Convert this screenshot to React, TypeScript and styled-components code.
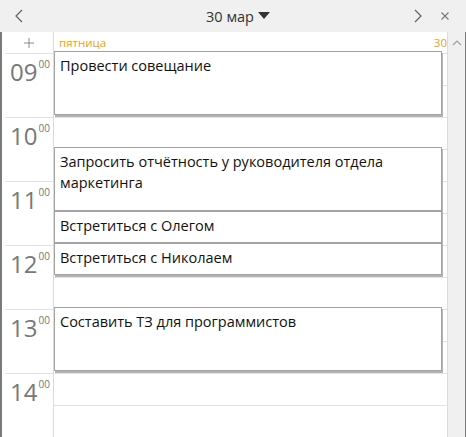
import React from 'react';
import styled, {createGlobalStyle} from 'styled-components';

const HOUR = 64;
const START = 9;

const GlobalStyle = createGlobalStyle`
  html, body {
    margin: 0;
    padding: 0;
    background: #ffffff;
  }
  body {
    font-family: "Open Sans", "Noto Sans", sans-serif;
  }
`

const Window = styled.div`
  width: 466px;
  height: 437px;
  display: flex;
  flex-direction: column;
  overflow: hidden;
  background: #ffffff;
`

const Header = styled.header`
  height: 32px;
  flex: 0 0 auto;
  background: #f0f0f0;
  display: grid;
  grid-template-columns: 1fr auto 1fr;
  align-items: center;
  color: #333;
`

const HeaderSide = styled.div`
  display: flex;
  align-items: center;
  justify-content: ${({$end}) => $end ? 'flex-end' : 'flex-start'};
  gap: 19px;
  padding: ${({$end}) => $end ? '0 17px 0 0' : '0 0 0 15px'};
  color: #606060;
`

const Title = styled.div`
  display: flex;
  align-items: center;
  gap: 4px;
  font-size: 14.5px;
  color: #333;
  padding-left: 10px;
`

const Body = styled.div`
  flex: 1;
  display: flex;
  border-left: 2px solid #7a7a7a;
  border-right: 1px solid #7a7a7a;
  min-height: 0;
`

const Main = styled.div`
  flex: 1;
  display: flex;
  flex-direction: column;
  border-right: 1px solid #dcdcdc;
`

const DayRow = styled.div`
  height: 21px;
  flex: 0 0 auto;
  display: grid;
  grid-template-columns: 52px 1fr;
  align-items: center;
`

const AddCell = styled.div`
  height: 100%;
  display: flex;
  align-items: center;
  justify-content: center;
  padding-left: 2px;
  border-right: 1px solid #dcdcdc;
  box-sizing: border-box;
`

const DayLabel = styled.div`
  display: flex;
  justify-content: space-between;
  align-items: center;
  padding: 0 0 0 5px;
  font-size: 11.5px;
  color: #e8a21a;
`

const Grid = styled.div`
  position: relative;
  flex: 1;
`

const HourRow = styled.div`
  height: ${HOUR}px;
  display: grid;
  grid-template-columns: 52px 1fr;
`

const TimeLabel = styled.div`
  border-right: 1px solid #dcdcdc;
  box-sizing: border-box;
  display: flex;
  align-items: flex-start;
  padding-left: 8px;
  color: #787878;
  position: relative;

  &::before {
    content: '';
    position: absolute;
    top: 0;
    left: 3px;
    right: 0;
    border-top: 1px solid #e2e2e2;
  }
`

const HourNum = styled.span`
  font-size: 24px;
  line-height: 30px;
  margin-top: 4px;
`

const Minutes = styled.span`
  font-size: 10px;
  line-height: 12px;
  margin-left: 1px;
  margin-top: 5px;
`

const Slots = styled.div`
  display: flex;
  flex-direction: column;
  border-top: 1px solid #e2e2e2;
`

const Half = styled.div`
  flex: 1;
  border-top: ${({$line}) => $line ? '1px solid #e2e2e2' : 'none'};
`

const EventCard = styled.div`
  position: absolute;
  left: 52px;
  right: 5px;
  box-sizing: border-box;
  background: #ffffff;
  border: 1px solid #a3a3a3;
  box-shadow: 1px 2px 0 #b4b4b4;
  padding: 3px 5px;
  font-size: 14.5px;
  line-height: 21px;
  color: #111;
`

const Scroll = styled.div`
  width: 17px;
  flex: 0 0 auto;
  background: #f0f0f0;
  display: flex;
  justify-content: center;
  padding-top: 7px;
  box-sizing: border-box;
  color: #a0a0a0;
`

type CalEvent = {title: string; start: number; duration: number};

const events: CalEvent[] = [
  {title: 'Провести совещание', start: 9, duration: 1},
  {title: 'Запросить отчётность у руководителя отдела маркетинга', start: 10.5, duration: 1},
  {title: 'Встретиться с Олегом', start: 11.5, duration: 0.5},
  {title: 'Встретиться с Николаем', start: 12, duration: 0.5},
  {title: 'Составить ТЗ для программистов', start: 13, duration: 1},
];

const hours = [9, 10, 11, 12, 13, 14];

const Chevron = ({dir}: {dir: 'left' | 'right' | 'up'}) => {
  const d = dir === 'left' ? 'M7 1 L1 7 L7 13' : dir === 'right' ? 'M1 1 L7 7 L1 13' : 'M1 6 L5 2 L9 6';
  const w = dir === 'up' ? 10 : 8;
  const h = dir === 'up' ? 8 : 14;
  return <svg width={w} height={h} viewBox={`0 0 ${w} ${h}`} fill="none" stroke="currentColor" strokeWidth="1.2">
    <path d={d}/>
  </svg>
}

export default function App() {
  return <>
    <GlobalStyle/>
    <Window>
      <Header>
        <HeaderSide><Chevron dir="left"/></HeaderSide>
        <Title>
          30 мар
          <svg width="12" height="8" viewBox="0 0 12 8"><path d="M0 0 L12 0 L6 7 Z" fill="#333"/></svg>
        </Title>
        <HeaderSide $end>
          <Chevron dir="right"/>
          <svg width="8" height="8" viewBox="0 0 8 8" stroke="#777" strokeWidth="1.1"><path d="M0.5 0.5 L7.5 7.5 M7.5 0.5 L0.5 7.5"/></svg>
        </HeaderSide>
      </Header>
      <Body>
        <Main>
          <DayRow>
            <AddCell>
              <svg width="10" height="10" viewBox="0 0 10 10" stroke="#8a8a8a" strokeWidth="1"><path d="M5 0 V10 M0 5 H10"/></svg>
            </AddCell>
            <DayLabel>
              <span>пятница</span>
              <span>30</span>
            </DayLabel>
          </DayRow>
          <Grid>
            {hours.map(h => <HourRow key={h}>
              <TimeLabel>
                <HourNum>{String(h).padStart(2, '0')}</HourNum>
                <Minutes>00</Minutes>
              </TimeLabel>
              <Slots>
                <Half/>
                <Half $line/>
              </Slots>
            </HourRow>)}
            {events.map(ev => <EventCard
              key={ev.title}
              style={{top: (ev.start - START) * HOUR - 2, height: ev.duration * HOUR}}
            >{ev.title}</EventCard>)}
          </Grid>
        </Main>
        <Scroll><Chevron dir="up"/></Scroll>
      </Body>
    </Window>
  </>
}
